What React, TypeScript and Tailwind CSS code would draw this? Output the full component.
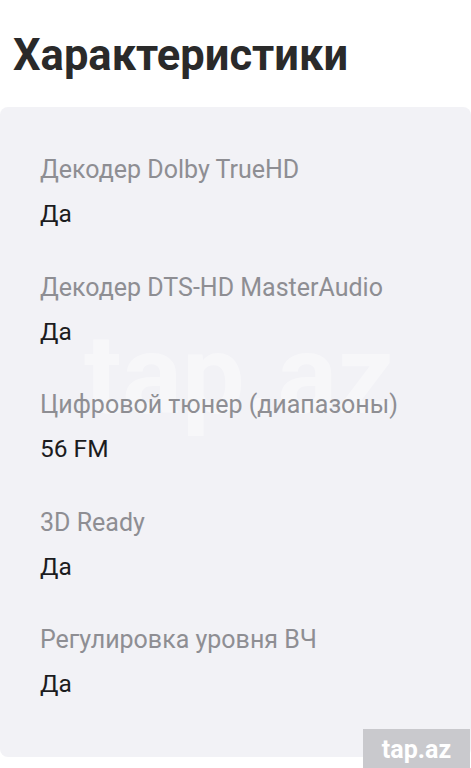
const specs = [
  { label: "Декодер Dolby TrueHD", value: "Да" },
  { label: "Декодер DTS-HD MasterAudio", value: "Да" },
  { label: "Цифровой тюнер (диапазоны)", value: "56 FM" },
  { label: "3D Ready", value: "Да" },
  { label: "Регулировка уровня ВЧ", value: "Да" },
];

export default function App() {
  return (
    <div
      className="relative min-h-[768px] w-[471px] overflow-hidden bg-white"
      style={{ fontFamily: "Roboto, 'Noto Sans', sans-serif" }}
    >
      <h1 className="pl-[13px] pt-[31px] text-[43.5px] font-bold leading-[50px] text-[#2a2a2a]">
        Характеристики
      </h1>

      {/* specs card */}
      <div className="relative mt-[26px] rounded-lg bg-[#f2f2f6] pb-[57px] pl-10 pt-[47px]">
        {/* faint watermark */}
        <span
          aria-hidden
          className="pointer-events-none absolute left-[84px] top-[212px] select-none text-[112px] font-bold leading-none text-white/40"
        >
          tap.az
        </span>

        <div className="relative flex flex-col gap-[41.5px]">
          {specs.map((s) => (
            <div key={s.label} className="flex flex-col gap-3">
              <span className="text-[25px] leading-8 text-[#8e8e93]">{s.label}</span>
              <span className="text-[24.5px] leading-8 text-[#1c1c1e]">{s.value}</span>
            </div>
          ))}
        </div>
      </div>

      {/* badge */}
      <div className="absolute left-[363px] top-[729px] flex h-[40px] w-[107px] items-center justify-center bg-[#c9c9cd]">
        <span className="text-[25px] font-bold leading-none text-white">tap.az</span>
      </div>
    </div>
  );
}
